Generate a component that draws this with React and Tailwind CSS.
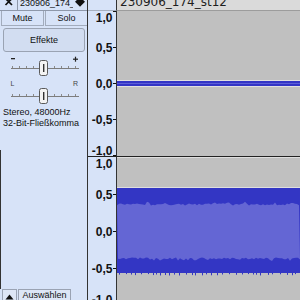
import React from "react";

function rng(seed) {
  let s = seed;
  return () => {
    s = (s * 9301 + 49297) % 233280;
    return s / 233280;
  };
}

function Ruler({ ticks, labels, height }) {
  return (
    <svg width="28" height={height} className="block">
      {labels.map((l, i) => (
        <text
          key={i}
          x="24.5"
          y={l.y}
          textAnchor="end"
          fontSize="12"
          fontWeight="700"
          fill="#111"
          fontFamily="Liberation Sans, Arial, sans-serif"
        >
          {l.t}
        </text>
      ))}
      {ticks.map((t, i) => (
        <rect key={i} x="25" y={t} width="3" height="1" fill="#111" />
      ))}
    </svg>
  );
}

function Wave2() {
  const r = rng(17);
  const W = 183;
  let top = [];
  let bot = [];
  for (let x = 0; x <= W; x += 2) {
    top.push([x, 45.5 + r() * 2 + (r() < 0.18 ? -1.8 : 0)]);
  }
  for (let x = W; x >= 0; x -= 2) {
    bot.push([x, 99.5 + r() * 2 + (r() < 0.18 ? 1.8 : 0)]);
  }
  const pts = [...top, ...bot].map((p) => p.join(",")).join(" ");
  const spikes = [];
  for (let x = 2; x < W; x += 3 + Math.floor(r() * 6)) {
    spikes.push({ x, h: 1 + r() * 1.5 });
  }
  return (
    <svg width={W} height="148" className="block">
      <rect x="0" y="29" width={W} height="1" fill="#dedede" />
      <rect x="0" y="30" width={W} height="85" fill="#3336c4" />
      {spikes.map((s, i) => (
        <rect key={i} x={s.x} y="115" width="1" height={s.h} fill="#3336c4" />
      ))}
      <polygon points={pts} fill="#6466d4" />
    </svg>
  );
}

function Sliders() {
  const ticks = [];
  for (let x = 12; x <= 79; x += 7) ticks.push(x);
  return (
    <svg width="87" height="54" className="block">
      {/* gain */}
      <rect x="11" y="6" width="4" height="1.3" fill="#222" />
      <rect x="73" y="6.6" width="5" height="1.2" fill="#222" />
      <rect x="74.9" y="4.7" width="1.2" height="5" fill="#222" />
      <rect x="11" y="16" width="68" height="1" fill="#7d7d7d" />
      {ticks.map((x) => (
        <rect key={"g" + x} x={x} y="14" width="1" height="2" fill="#8a8a8a" />
      ))}
      <rect x="39.5" y="8.5" width="8" height="15" rx="2" fill="#f3f3f3" stroke="#5a5a5a" />
      <rect x="43" y="12" width="1.4" height="8" fill="#333" />
      {/* pan */}
      <text x="10.5" y="34" fontSize="7" fill="#444" fontFamily="Liberation Sans, Arial, sans-serif">L</text>
      <text x="73" y="34" fontSize="7" fill="#444" fontFamily="Liberation Sans, Arial, sans-serif">R</text>
      <rect x="11" y="44" width="68" height="1" fill="#7d7d7d" />
      {ticks.map((x) => (
        <rect key={"p" + x} x={x} y="42" width="1" height="2" fill="#8a8a8a" />
      ))}
      <rect x="39.5" y="36.5" width="8" height="15" rx="2" fill="#f3f3f3" stroke="#5a5a5a" />
      <rect x="43" y="40" width="1.4" height="8" fill="#333" />
    </svg>
  );
}

function LeftPanel() {
  return (
    <div className="w-[88px] shrink-0 h-full flex flex-col bg-[#d7e3f8] border-r border-[#333] text-[9px] text-[#111]">
      <div className="h-[11px] shrink-0 flex border-b border-[#8e98aa] overflow-hidden">
        <div className="w-[18px] shrink-0 border-r border-[#8e98aa] flex justify-center">
          <svg width="10" height="10" className="block">
            <path d="M1.5 -1.5 L8 5 M8 -1.5 L1.5 5" stroke="#111" strokeWidth="1.7" />
          </svg>
        </div>
        <div className="flex-1 min-w-0 overflow-hidden whitespace-nowrap pl-[2px] leading-[11px] -mt-[2px]">
          230906_174_
        </div>
        <div className="w-[14px] shrink-0">
          <svg width="14" height="10" className="block">
            <polygon points="2,1.8 7,-3 12,1.8 7,6.8" fill="#111" />
          </svg>
        </div>
      </div>
      <div className="h-[15px] shrink-0 flex pl-[1px] gap-[1px]">
        <div className="w-[43px] border border-t-0 border-[#a2acbd] flex items-center justify-center leading-[11px]">
          Mute
        </div>
        <div className="flex-1 border border-t-0 border-r-0 border-[#a2acbd] flex items-center justify-center leading-[11px]">
          Solo
        </div>
      </div>
      <div className="mt-[2px] ml-[3px] mr-[2px] h-[24px] shrink-0 border border-[#9aa3b3] rounded-[3px] bg-[#d2ddf1] flex items-center justify-center leading-[11px]">
        Effekte
      </div>
      <Sliders />
      <div className="mt-[1px] px-[3px] leading-[11px] shrink-0">
        <div>Stereo, 48000Hz</div>
        <div>32-Bit-Fließkomma</div>
      </div>
      <div className="h-[21px] shrink-0" />
      <div className="flex-1 border-l border-[#333]" />
      <div className="h-[11px] shrink-0 flex pl-[2px] gap-[1px]">
        <div className="w-[15px] border border-b-0 border-[#9aa3b3] bg-[#dde6f6] flex justify-center pt-[4px]">
          <svg width="9" height="6" className="block">
            <polygon points="0.5,5.5 4.5,0.5 8.5,5.5" fill="#111" />
          </svg>
        </div>
        <div className="w-[53px] border border-b-0 border-[#9aa3b3] bg-[#dde6f6] text-center leading-[11px]">
          Auswählen
        </div>
      </div>
    </div>
  );
}

export default function App() {
  return (
    <div className="w-[300px] h-[300px] overflow-hidden flex bg-[#c0c0c0] font-['Liberation_Sans',Arial,sans-serif]">
      <LeftPanel />
      <div className="flex-1 min-w-0 h-full flex flex-col">
        <div className="h-[11px] shrink-0 flex">
          <div className="w-[29px] shrink-0 bg-[#d7e3f8] border-r border-r-[#333] border-b border-b-[#a6b0c0]" />
          <div className="flex-1 min-w-0 overflow-hidden bg-[#dadada] border-b border-[#9c9c9c] pl-[3px]">
            <div className="-mt-[4px] text-[12px] leading-[13px] whitespace-nowrap text-[#1e1e1e] font-['DejaVu_Sans',sans-serif]">
              230906_174_st12
            </div>
          </div>
        </div>
        <div className="h-[145px] shrink-0 flex">
          <div className="w-[29px] shrink-0 bg-[#d7e3f8] border-r border-[#333]">
            <Ruler
              height={145}
              ticks={[0, 36, 72, 108, 144]}
              labels={[
                { t: "1,0", y: 10.5 },
                { t: "0,5", y: 40.5 },
                { t: "0,0", y: 76.5 },
                { t: "-0,5", y: 112.5 },
                { t: "-1,0", y: 143.5 },
              ]}
            />
          </div>
          <div className="flex-1 min-w-0 bg-[#c0c0c0] flex flex-col justify-center">
            <div className="h-[7px] border-y border-[#e0e0e0] bg-[#3234c6] flex items-center">
              <div className="h-[1px] w-full bg-[#5c5ed6]" />
            </div>
          </div>
        </div>
        <div className="h-[1px] shrink-0 bg-[#222]" />
        <div className="flex-1 min-h-0 flex">
          <div className="w-[29px] shrink-0 bg-[#d7e3f8] border-r border-[#333] overflow-hidden">
            <Ruler
              height={150}
              ticks={[37, 74, 111, 148]}
              labels={[
                { t: "1,0", y: 11 },
                { t: "0,5", y: 41.5 },
                { t: "0,0", y: 78.5 },
                { t: "-0,5", y: 115.5 },
                { t: "-1,0", y: 146.5 },
              ]}
            />
          </div>
          <div className="flex-1 min-w-0 bg-[#c0c0c0] border-t border-[#dedede] overflow-hidden">
            <Wave2 />
          </div>
        </div>
      </div>
    </div>
  );
}
